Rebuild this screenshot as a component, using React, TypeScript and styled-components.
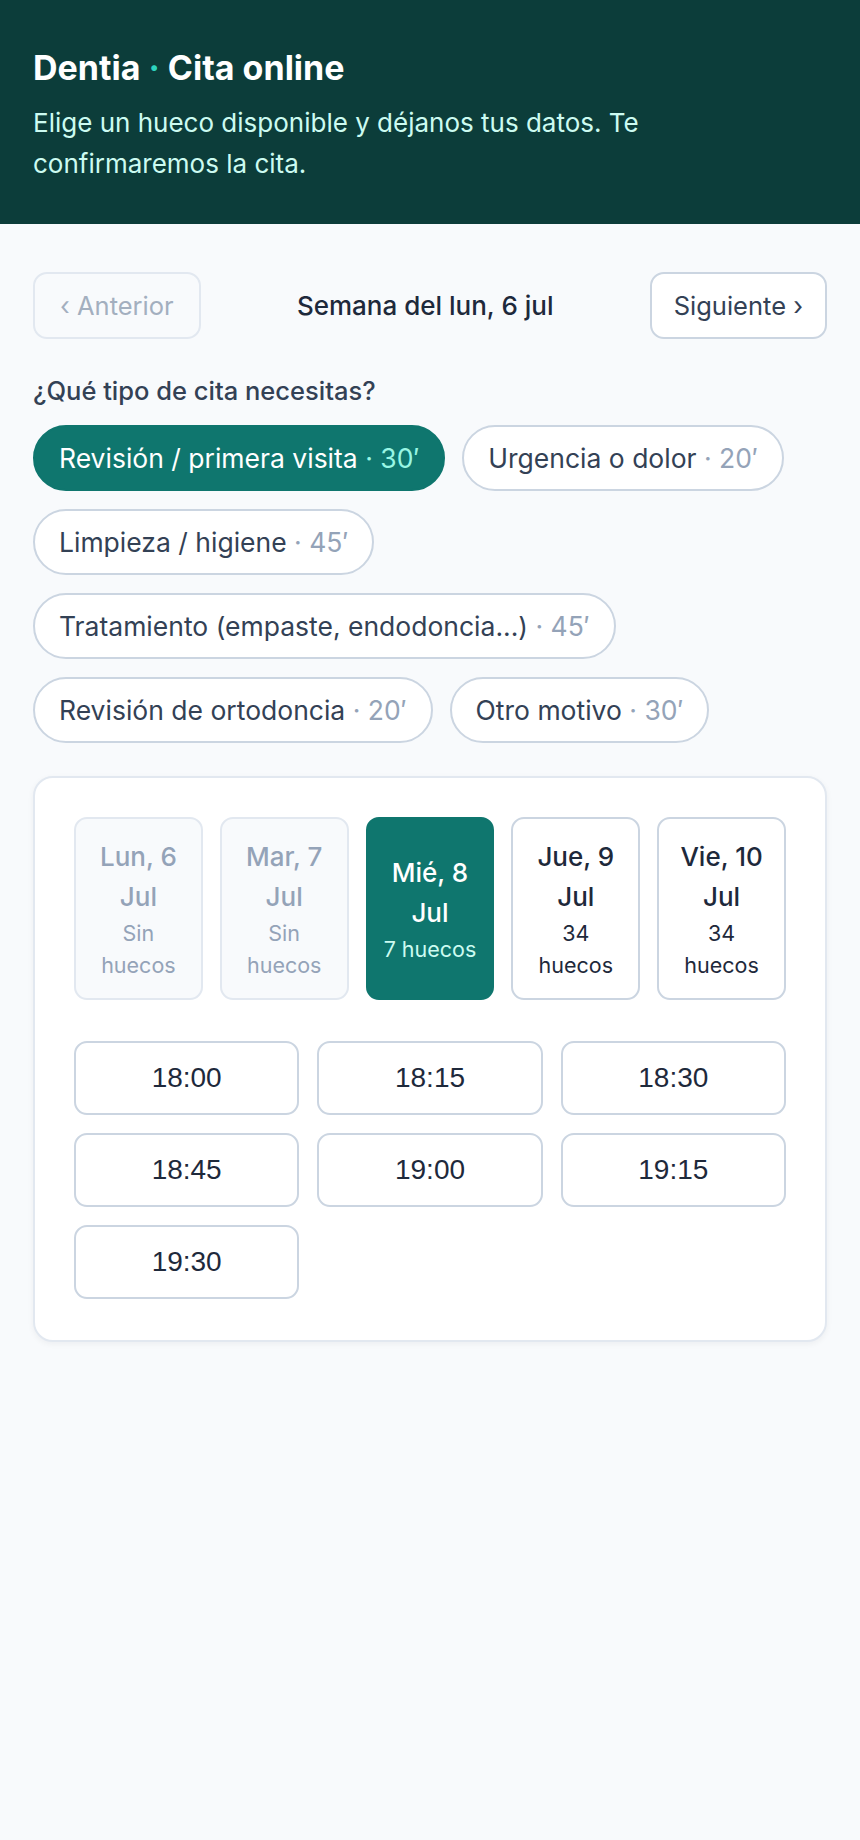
import { createGlobalStyle, styled } from "styled-components";

type DayState = "off" | "open" | "active";

interface iDay {
    label: string;
    slots: string;
    state: DayState;
}

interface iKind {
    name: string;
    minutes: number;
}

const kinds: iKind[] = [
    { name: "Revisión / primera visita", minutes: 30 },
    { name: "Urgencia o dolor", minutes: 20 },
    { name: "Limpieza / higiene", minutes: 45 },
    { name: "Tratamiento (empaste, endodoncia...)", minutes: 45 },
    { name: "Revisión de ortodoncia", minutes: 20 },
    { name: "Otro motivo", minutes: 30 },
];

const days: iDay[] = [
    { label: "Lun, 6 Jul", slots: "Sin huecos", state: "off" },
    { label: "Mar, 7 Jul", slots: "Sin huecos", state: "off" },
    { label: "Mié, 8 Jul", slots: "7 huecos", state: "active" },
    { label: "Jue, 9 Jul", slots: "34 huecos", state: "open" },
    { label: "Vie, 10 Jul", slots: "34 huecos", state: "open" },
];

const times = ["18:00", "18:15", "18:30", "18:45", "19:00", "19:15", "19:30"];

const GlobalStyle = createGlobalStyle`
    html, body {
        margin: 0;
        background: #f8fafc;
    }
    body {
        font-family: Inter, "Noto Sans", sans-serif;
        color: #1e293b;
    }
    * {
        box-sizing: border-box;
    }
`;

const Header = styled.header`
    background: #0c3d3a;
    padding: 48px 33px 40px;
`;

const Title = styled.h1`
    margin: 0;
    font-size: 34px;
    line-height: 40px;
    font-weight: 700;
    color: #ffffff;
`;

const Dot = styled.span`
    color: #2dd4bf;
`;

const Lead = styled.p`
    margin: 14px 0 0;
    max-width: 680px;
    font-size: 26px;
    line-height: 41px;
    color: #ccfbf1;
`;

const Main = styled.main`
    padding: 48px 33px 40px;
`;

const WeekNav = styled.div`
    display: flex;
    align-items: center;
    justify-content: space-between;
`;

const NavButton = styled.button`
    height: 67px;
    padding: 0 25px;
    border-radius: 14px;
    border: 2px solid #cbd5e1;
    background: #ffffff;
    color: #334155;
    font-family: inherit;
    font-size: 25.5px;
    cursor: pointer;
    &:last-child {
        padding: 0 22px;
    }
    &:disabled {
        background: transparent;
        border-color: #e2e8f0;
        color: #a3afbf;
        cursor: default;
    }
`;

const WeekLabel = styled.span`
    font-size: 26px;
    font-weight: 500;
    color: #1e293b;
`;

const Question = styled.p`
    margin: 37px 0 19px;
    font-size: 25.5px;
    line-height: 30px;
    font-weight: 500;
    color: #334155;
`;

const Chips = styled.div`
    display: flex;
    flex-wrap: wrap;
    gap: 18px 17px;
`;

const Chip = styled.button<{ $active?: boolean }>`
    height: 66px;
    padding: 0 24px;
    border-radius: 999px;
    border: 2px solid ${(p) => (p.$active ? "#0f766e" : "#cbd5e1")};
    background: ${(p) => (p.$active ? "#0f766e" : "#ffffff")};
    color: ${(p) => (p.$active ? "#ffffff" : "#334155")};
    font-family: inherit;
    font-size: 26.5px;
    cursor: pointer;
`;

const Minutes = styled.span<{ $active?: boolean }>`
    color: ${(p) => (p.$active ? "#99f6e4" : "#94a3b8")};
`;

const Card = styled.section`
    margin-top: 33px;
    background: #ffffff;
    border: 2px solid #e2e8f0;
    border-radius: 20px;
    padding: 39px 39px 41px;
    box-shadow: 0 2px 6px rgba(15, 23, 42, 0.05);
`;

const DayRow = styled.div`
    display: grid;
    grid-template-columns: repeat(5, 1fr);
    gap: 17px;
`;

const Day = styled.button<{ $state: DayState }>`
    height: 183px;
    padding: 0 12px;
    border-radius: 13px;
    display: flex;
    flex-direction: column;
    align-items: center;
    justify-content: center;
    text-align: center;
    font-family: inherit;
    cursor: ${(p) => (p.$state === "off" ? "default" : "pointer")};
    border: 2px solid
        ${(p) => (p.$state === "active" ? "#0f766e" : p.$state === "off" ? "#e2e8f0" : "#cbd5e1")};
    background: ${(p) => (p.$state === "active" ? "#0f766e" : p.$state === "off" ? "#f8fafc" : "#ffffff")};
    color: ${(p) => (p.$state === "active" ? "#ffffff" : p.$state === "off" ? "#94a3b8" : "#1e293b")};
`;

const DayName = styled.span`
    font-size: 26px;
    line-height: 40px;
    font-weight: 500;
`;

const DaySlots = styled.span<{ $active?: boolean }>`
    font-size: 21.5px;
    line-height: 32px;
    color: ${(p) => (p.$active ? "#ccfbf1" : "inherit")};
`;

const TimeGrid = styled.div`
    margin-top: 41px;
    display: grid;
    grid-template-columns: repeat(3, 1fr);
    gap: 18px;
`;

const TimeSlot = styled.button`
    height: 74px;
    border-radius: 13px;
    border: 2px solid #cbd5e1;
    background: #ffffff;
    color: #1e293b;
    font-family: "Liberation Sans", Arial, sans-serif;
    font-size: 28px;
    cursor: pointer;
`;

export default function App() {
    return (
        <>
            <GlobalStyle />
            <Header>
                <Title>
                    Dentia <Dot>·</Dot> Cita online
                </Title>
                <Lead>Elige un hueco disponible y déjanos tus datos. Te confirmaremos la cita.</Lead>
            </Header>
            <Main>
                <WeekNav>
                    <NavButton disabled>‹ Anterior</NavButton>
                    <WeekLabel>Semana del lun, 6 jul</WeekLabel>
                    <NavButton>Siguiente ›</NavButton>
                </WeekNav>
                <Question>¿Qué tipo de cita necesitas?</Question>
                <Chips>
                    {kinds.map((k, i) => (
                        <Chip key={k.name} $active={i === 0}>
                            {k.name} <Minutes $active={i === 0}>· {k.minutes}′</Minutes>
                        </Chip>
                    ))}
                </Chips>
                <Card>
                    <DayRow>
                        {days.map((d) => (
                            <Day key={d.label} $state={d.state} disabled={d.state === "off"}>
                                <DayName>{d.label}</DayName>
                                <DaySlots $active={d.state === "active"}>{d.slots}</DaySlots>
                            </Day>
                        ))}
                    </DayRow>
                    <TimeGrid>
                        {times.map((t) => (
                            <TimeSlot key={t}>{t}</TimeSlot>
                        ))}
                    </TimeGrid>
                </Card>
            </Main>
        </>
    );
}
